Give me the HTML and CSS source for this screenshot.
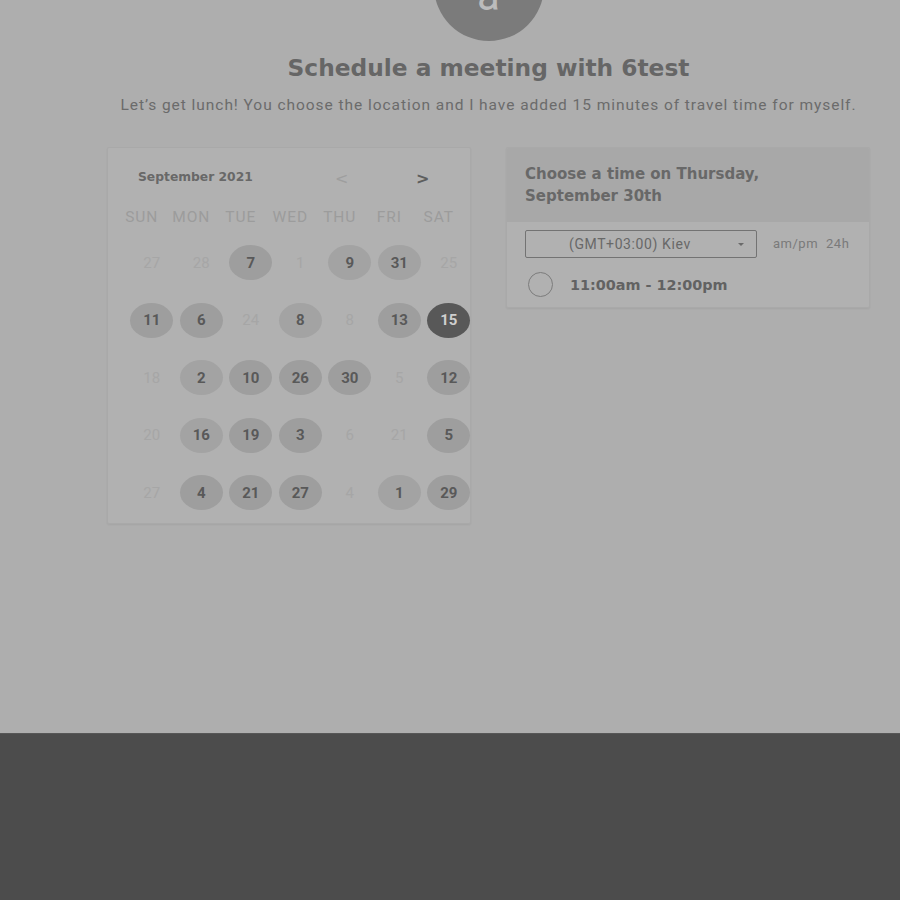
FILE: index.html
```html
<!DOCTYPE html>
<html>
<head>
<meta charset="utf-8">
<link rel="stylesheet" href="styles.css">
</head>
<body>
<div class="page">
  <div class="content">
    <div class="avatar"><span>a</span></div>
    <h1 class="title">Schedule a meeting with 6test</h1>
    <p class="subtitle">Let’s get lunch! You choose the location and I have added 15 minutes of travel time for myself.</p>
    <div class="columns">
      <div class="card calendar">
        <div class="cal-head">
          <span class="month">September 2021</span>
          <span class="nav prev">&lt;</span>
          <span class="nav next">&gt;</span>
        </div>
        <div class="weekdays">
          <span>SUN</span><span>MON</span><span>TUE</span><span>WED</span><span>THU</span><span>FRI</span><span>SAT</span>
        </div>
        <div class="days">
          <span class="d off">27</span><span class="d off">28</span><span class="d on">7</span><span class="d off">1</span><span class="d on tex">9</span><span class="d on tex">31</span><span class="d off">25</span>
          <span class="d on">11</span><span class="d on">6</span><span class="d off">24</span><span class="d on tex">8</span><span class="d off">8</span><span class="d on">13</span><span class="d sel">15</span>
          <span class="d off">18</span><span class="d on tex">2</span><span class="d on">10</span><span class="d on">26</span><span class="d on">30</span><span class="d off">5</span><span class="d on">12</span>
          <span class="d off">20</span><span class="d on tex">16</span><span class="d on">19</span><span class="d on">3</span><span class="d off">6</span><span class="d off">21</span><span class="d on">5</span>
          <span class="d off">27</span><span class="d on">4</span><span class="d on">21</span><span class="d on">27</span><span class="d off">4</span><span class="d on tex">1</span><span class="d on">29</span>
        </div>
      </div>
      <div class="card times">
        <div class="times-head">Choose a time on Thursday,<br>September 30th</div>
        <div class="tz-row">
          <div class="tz-select"><span>(GMT+03:00) Kiev</span><span class="caret"></span></div>
          <div class="fmt"><span>am/pm</span><span>24h</span></div>
        </div>
        <div class="slot">
          <span class="radio"></span>
          <span class="slot-text">11:00am - 12:00pm</span>
        </div>
      </div>
    </div>
  </div>
</div>
<div class="footer"></div>
</body>
</html>
```
FILE: styles.css
```css
html, body {
  margin: 0;
  padding: 0;
}
body {
  background: #aeaeae;
  font-family: Roboto, "Liberation Sans", sans-serif;
  overflow: hidden;
}
.page {
  height: 733px;
  overflow: hidden;
  padding-left: 77px;
  box-sizing: border-box;
}
.content {
  width: 823px;
  display: flex;
  flex-direction: column;
  align-items: center;
}
.avatar {
  width: 110px;
  height: 110px;
  margin-top: -69px;
  border-radius: 50%;
  background: #7b7b7b;
  display: flex;
  justify-content: center;
  align-items: flex-end;
}
.avatar span {
  font-family: Roboto, sans-serif;
  font-size: 42px;
  line-height: 42px;
  color: #bcbcbc;
  margin-bottom: 24px;
}
.title {
  margin: 13px 0 0;
  font-family: "DejaVu Sans", Verdana, sans-serif;
  font-weight: 700;
  font-size: 23.3px;
  line-height: 28px;
  color: #666666;
}
.subtitle {
  margin: 13px 0 0;
  font-size: 15.5px;
  line-height: 20px;
  letter-spacing: 0.95px;
  color: #6b6b6b;
}
.columns {
  margin-top: 32px;
  width: 763px;
  display: flex;
  gap: 35px;
  align-items: flex-start;
}
.card {
  width: 364px;
  box-sizing: border-box;
  background: #b1b1b1;
  border: 1px solid #a9a9a9;
  border-radius: 2px;
  box-shadow: 0 1px 2px rgba(0,0,0,0.06);
}
.calendar {
  height: 377px;
  padding: 0 0 0 19px;
}
.cal-head {
  height: 57px;
  display: flex;
  align-items: center;
  position: relative;
}
.month {
  margin-left: 11px;
  font-family: "DejaVu Sans", Verdana, sans-serif;
  font-weight: 700;
  font-size: 12.3px;
  color: #686868;
}
.nav {
  position: absolute;
  top: 21px;
  font-family: "DejaVu Sans", sans-serif;
  font-size: 16px;
}
.prev { left: 208px; color: #9e9e9e; }
.next { left: 289px; color: #5e5e5e; font-weight: 700; }
.weekdays {
  display: grid;
  grid-template-columns: repeat(7, 49.5px);
  margin-left: -10px;
  height: 24px;
  align-items: center;
  font-size: 15.5px;
  letter-spacing: 0.9px;
  color: #9c9c9c;
  text-align: center;
}
.days {
  display: grid;
  grid-template-columns: repeat(7, 49.5px);
  grid-auto-rows: 57.5px;
  margin-top: 5px;
  font-size: 15px;
}
.d {
  justify-self: center;
  align-self: center;
  width: 43px;
  height: 35px;
  border-radius: 50%;
  display: flex;
  align-items: center;
  justify-content: center;
}
.off {
  color: #a6a6a6;
  font-weight: 400;
}
.on {
  background: #9e9e9e;
  color: #595959;
  font-weight: 700;
}
.on.tex {
  background: #a3a3a3;
}
.sel {
  background: #585858;
  color: #cfcfcf;
  font-weight: 700;
}
.times {
  overflow: hidden;
}
.times-head {
  background: #a8a8a8;
  padding: 15px 18px 15px;
  font-family: "DejaVu Sans", Verdana, sans-serif;
  font-weight: 700;
  font-size: 15px;
  line-height: 22px;
  color: #686868;
}
.tz-row {
  display: flex;
  align-items: center;
  padding: 7px 0 0 18px;
  height: 29px;
}
.tz-select {
  width: 232px;
  height: 28px;
  box-sizing: border-box;
  border: 1px solid #737373;
  border-radius: 2px;
  display: flex;
  align-items: center;
  position: relative;
  font-size: 14px;
  letter-spacing: 0.6px;
  color: #686868;
}
.tz-select span:first-child {
  margin-left: 43px;
}
.caret {
  position: absolute;
  right: 12px;
  top: 12px;
  width: 0;
  height: 0;
  border-left: 3px solid transparent;
  border-right: 3px solid transparent;
  border-top: 3px solid #6a6a6a;
}
.fmt {
  margin-left: 16px;
  display: flex;
  gap: 8px;
  font-size: 13px;
  letter-spacing: 0.5px;
  color: #7a7a7a;
}
.slot {
  display: flex;
  align-items: center;
  height: 45px;
  padding: 4px 0 0 21px;
}
.radio {
  width: 23px;
  height: 23px;
  border: 1.5px solid #7c7c7c;
  border-radius: 50%;
}
.slot-text {
  margin-left: 17px;
  font-family: "DejaVu Sans", Verdana, sans-serif;
  font-weight: 700;
  font-size: 14.4px;
  color: #626262;
}
.footer {
  height: 167px;
  background: #4c4c4c;
  border-top: 1px solid #575757;
  box-sizing: border-box;
}
```
